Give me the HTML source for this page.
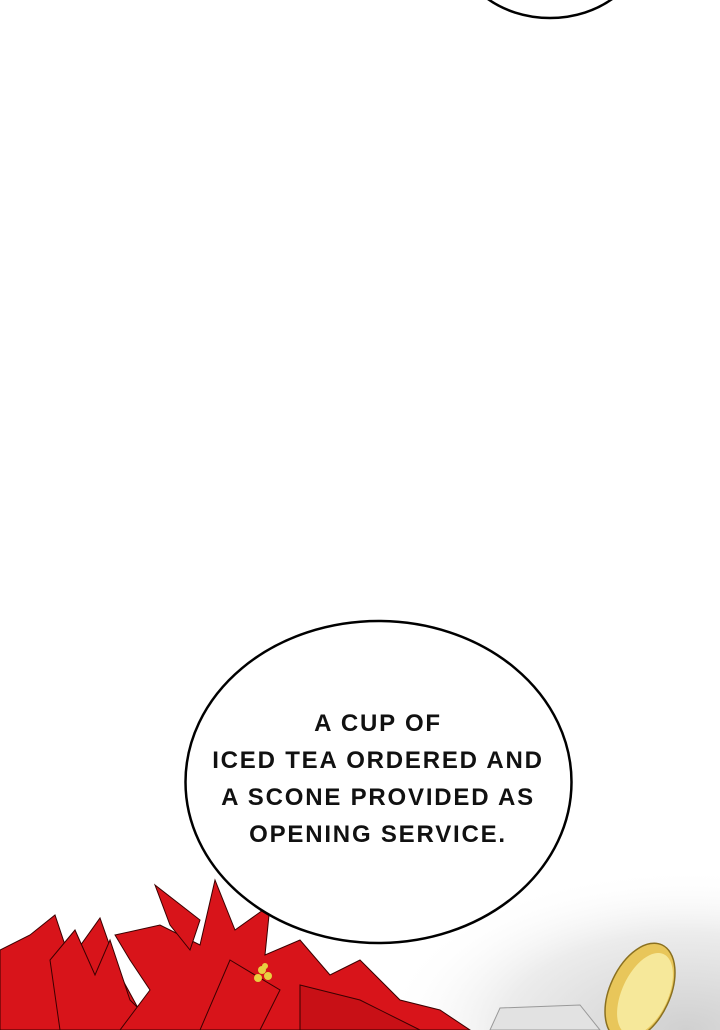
<!DOCTYPE html>
<html><head><style>
html,body{margin:0;padding:0;background:#fff;}
body{width:720px;height:1030px;position:relative;overflow:hidden;}
svg{position:absolute;left:0;top:0;}
.t{position:absolute;left:185px;width:386px;text-align:center;font-family:"Liberation Sans",sans-serif;font-weight:bold;font-size:24px;letter-spacing:1.8px;color:#111;line-height:37px;top:705px;}
</style></head><body>
<svg width="720" height="1030" viewBox="0 0 720 1030">
<defs>
<radialGradient id="g" cx="0.9" cy="1" r="0.9">
<stop offset="0" stop-color="#d0d0d0"/><stop offset="0.6" stop-color="#ececec"/><stop offset="1" stop-color="#fff" stop-opacity="0"/>
</radialGradient>
</defs>
<rect x="380" y="850" width="340" height="180" fill="url(#g)"/>
<ellipse cx="550" cy="-60" rx="95" ry="78" fill="#fff" stroke="#000" stroke-width="2.5"/>
<polygon points="490,1030 500,1008 580,1005 600,1030" fill="#e2e2e2" stroke="#999" stroke-width="1"/>
<ellipse cx="640" cy="992" rx="30" ry="52" transform="rotate(25 640 992)" fill="#e8c65a" stroke="#8a7020" stroke-width="1.5"/>
<ellipse cx="645" cy="994" rx="23" ry="44" transform="rotate(25 645 994)" fill="#f6e89a"/>
<g stroke="#3a0000" stroke-width="1" fill="#d8141a">
<polygon points="0,950 30,935 55,915 70,960 100,918 120,975 150,1030 0,1030"/>
<polygon points="60,1030 50,960 75,930 95,975 110,940 130,1000 160,1030"/>
<polygon points="115,935 160,925 200,945 215,880 235,930 270,905 265,955 300,940 330,975 360,960 400,1000 440,1010 470,1030 120,1030 150,990 130,960"/>
<polygon points="155,885 200,920 190,950 170,925"/>
<polygon points="230,960 280,990 260,1030 200,1030"/>
<polygon points="300,985 360,1000 420,1030 300,1030" fill="#c81016"/>
</g>
<g fill="#e8d040"><circle cx="262" cy="970" r="4"/><circle cx="268" cy="976" r="4"/><circle cx="258" cy="978" r="4"/><circle cx="265" cy="966" r="3"/></g>
<ellipse cx="378.5" cy="782" rx="193" ry="161" fill="#fff" stroke="#000" stroke-width="2.5"/>
</svg>
<div class="t">A CUP OF<br>ICED TEA ORDERED AND<br>A SCONE PROVIDED AS<br>OPENING SERVICE.</div>
</body></html>
